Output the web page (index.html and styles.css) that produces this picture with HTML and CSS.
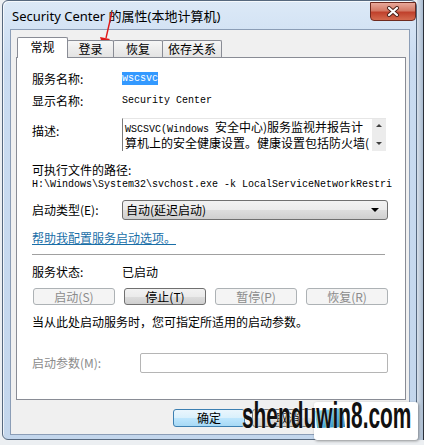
FILE: index.html
```html
<!DOCTYPE html>
<html lang="zh-CN">
<head>
    <meta charset="UTF-8">
    <meta name="viewport" content="width=device-width, initial-scale=1.0">
    <title>Security Center 的属性(本地计算机)</title>
    <link rel="stylesheet" href="styles.css">
</head>
<body>
    <div class="desktop">
        <div class="window">
            <div class="titlebar">
                <span class="title">Security Center 的属性(本地计算机)</span>
                <div class="close-btn">
                    <svg width="14" height="11" viewBox="0 0 14 11">
                        <path d="M3 2 L11 9 M11 2 L3 9" stroke="#4a2018" stroke-width="4" stroke-linecap="round"/>
                        <path d="M3 2 L11 9 M11 2 L3 9" stroke="#ffffff" stroke-width="2.2" stroke-linecap="round"/>
                    </svg>
                </div>
            </div>

            <div class="client">
                <div class="tabs">
                    <div class="tab active">常规</div>
                    <div class="tab tab-login">登录</div>
                    <div class="tab tab-recover">恢复</div>
                    <div class="tab tab-deps">依存关系</div>
                </div>

                <div class="panel">
                    <div class="field">
                        <span class="label">服务名称:</span>
                        <span class="mono"><span class="selected">wscsvc</span></span>
                    </div>
                    <div class="field gap-8">
                        <span class="label">显示名称:</span>
                        <span class="mono">Security Center</span>
                    </div>
                    <div class="field desc-row">
                        <span class="label desc-label">描述:</span>
                        <div class="desc-box">
                            <div class="desc-text"><span class="mono">WSCSVC(Windows </span>安全中心)服务监视并报告计<br>算机上的安全健康设置。健康设置包括防火墙(</div>
                            <div class="scrollbar">
                                <span class="arrow-up"></span>
                                <span class="arrow-down"></span>
                            </div>
                        </div>
                    </div>
                    <div class="path-label">可执行文件的路径:</div>
                    <div class="path mono">H:\Windows\System32\svchost.exe -k LocalServiceNetworkRestricted</div>
                    <div class="field startup-row">
                        <span class="label">启动类型(E):</span>
                        <div class="combo">
                            <span>自动(延迟启动)</span>
                            <span class="combo-arrow"></span>
                        </div>
                    </div>
                    <a href="#" class="help-link">帮助我配置服务启动选项。</a>
                    <div class="separator"></div>
                    <div class="field status-row">
                        <span class="label">服务状态:</span>
                        <span>已启动</span>
                    </div>
                    <div class="control-buttons">
                        <button class="btn" disabled>启动(S)</button>
                        <button class="btn">停止(T)</button>
                        <button class="btn" disabled>暂停(P)</button>
                        <button class="btn" disabled>恢复(R)</button>
                    </div>
                    <p class="note">当从此处启动服务时，您可指定所适用的启动参数。</p>
                    <div class="field params-row">
                        <span class="label disabled-text">启动参数(M):</span>
                        <div class="params-input"></div>
                    </div>
                </div>

                <div class="actions">
                    <button class="btn dialog-btn default">确定</button>
                    <button class="btn dialog-btn">取消</button>
                    <button class="btn dialog-btn">应用(A)</button>
                </div>
            </div>
        </div>
        <div class="desktop-edge"></div>
    </div>

    <!-- red annotation arrow -->
    <svg class="annotation" width="130" height="60" viewBox="0 0 130 60">
        <path d="M112 12 L106 38" stroke="#e01818" stroke-width="1.4" fill="none"/>
        <polygon points="103,47 100,37 110,39" fill="#e01818"/>
    </svg>

    <!-- site watermark -->
    <div class="wm-box"></div>
    <svg class="wm-logo" width="34" height="22" viewBox="0 0 34 22">
        <defs>
            <linearGradient id="wmg" x1="0" y1="0" x2="1" y2="1">
                <stop offset="0" stop-color="#7fe3f5"/>
                <stop offset="1" stop-color="#1a7fb8"/>
            </linearGradient>
        </defs>
        <polygon points="2,4 30,1 32,20 4,21" fill="url(#wmg)"/>
    </svg>
    <div class="wm-text">shenduwin8.com</div>
</body>
</html>
```

FILE: styles.css
```css
:root {
    --frame-top: #dce9f7;
    --frame-bottom: #c3d6ec;
    --frame-border: #56687e;
    --client-bg: #f0f0f0;
    --panel-border: #898c95;
    --text: #000000;
    --text-disabled: #8b8b8b;
    --link: #1a6fa8;
    --select: #3399ff;
}

* {
    margin: 0;
    padding: 0;
    box-sizing: border-box;
}

body {
    width: 424px;
    height: 445px;
    overflow: hidden;
    position: relative;
    background: #eceff2;
    font-family: "Noto Sans CJK SC", sans-serif;
    font-size: 12px;
    color: var(--text);
}

.mono {
    font-family: "Liberation Mono", "Noto Sans CJK SC", monospace;
    font-size: 10px;
}

.desktop {
    display: flex;
    height: 445px;
}

/* Window frame */
.window {
    width: 415px;
    height: 440px;
    margin-left: 2px;
    border: 1px solid var(--frame-border);
    border-radius: 6px;
    background: linear-gradient(var(--frame-top), #cadcf1 60px, var(--frame-bottom));
    display: flex;
    flex-direction: column;
    box-shadow: inset 1px 1px 0 rgba(255, 255, 255, 0.7);
}

.desktop-edge {
    flex: 1;
    height: 440px;
    background: linear-gradient(to right, #d7e0ea, #a9bbd0);
    border-right: 1px solid #2a2f38;
}

.titlebar {
    height: 28px;
    display: flex;
    align-items: flex-start;
    justify-content: space-between;
    padding: 0 0 0 9px;
}

.title {
    margin-top: 7px;
    line-height: 16px;
    font-family: "Noto Sans", "Noto Sans CJK SC", sans-serif;
    font-size: 13px;
    color: #000;
}

.close-btn {
    width: 46px;
    height: 19px;
    margin-top: 1px;
    border: 1px solid #6e2a1f;
    border-radius: 0 0 4px 4px;
    background: linear-gradient(#e8a89a 0%, #d47a66 45%, #c0412c 55%, #d46a4e 100%);
    display: flex;
    align-items: center;
    justify-content: center;
}

/* Client area */
.client {
    flex: 1;
    margin: 0 6px 4px 7px;
    background: var(--client-bg);
    border: 1px solid #8b9db6;
    padding: 7px 3px 0 5px;
}

.tabs {
    display: flex;
    align-items: flex-end;
    height: 21px;
    margin-bottom: -1px;
    padding-left: 1px;
    position: relative;
    z-index: 1;
}

.tab {
    height: 17px;
    margin-bottom: 1px;
    border: 1px solid var(--panel-border);
    border-bottom: none;
    border-radius: 2px 2px 0 0;
    background: linear-gradient(#f6f6f6, #e3e3e3);
    display: flex;
    align-items: center;
    justify-content: center;
    line-height: 14px;
    margin-left: -1px;
}

.tab.active {
    width: 51px;
    height: 21px;
    margin-bottom: 0;
    margin-left: 0;
    background: #fff;
    padding-bottom: 2px;
}

.tab-login { width: 47px; }
.tab-recover { width: 50px; }
.tab-deps { width: 60px; }

.panel {
    height: 343px;
    border: 1px solid var(--panel-border);
    background: #fff;
    padding: 14px 17px 0 15px;
}

.field {
    display: grid;
    grid-template-columns: 90px 1fr;
    align-items: center;
    line-height: 14px;
}

.gap-8 { margin-top: 8px; }

.selected {
    display: inline-block;
    background: var(--select);
    color: #fff;
    line-height: 13px;
}

/* Description */
.desc-row {
    margin-top: 10px;
    align-items: start;
}

.desc-label {
    padding-top: 6px;
}

.desc-box {
    height: 33px;
    width: 264px;
    display: flex;
    border-left: 1px solid #7a7a7a;
    border-top: 1px solid #e6e6e6;
    overflow: hidden;
}

.desc-text {
    flex: 1;
    padding: 1px 0 0 2px;
    line-height: 13px;
    white-space: nowrap;
    overflow: hidden;
}

.scrollbar {
    width: 14px;
    background: #ececec;
    display: flex;
    flex-direction: column;
    justify-content: space-between;
    align-items: center;
    padding: 5px 0 6px;
}

.arrow-up,
.arrow-down {
    width: 0;
    height: 0;
    border-left: 3px solid transparent;
    border-right: 3px solid transparent;
}

.arrow-up { border-bottom: 3px solid #404040; }
.arrow-down { border-top: 3px solid #404040; }

.path-label {
    margin-top: 12px;
    line-height: 14px;
}

.path {
    margin-top: 1px;
    width: 360px;
    line-height: 14px;
    white-space: nowrap;
    overflow: hidden;
}

/* Startup type */
.startup-row { margin-top: 8px; }

.combo {
    height: 20px;
    border: 1px solid #707070;
    border-radius: 3px;
    background: linear-gradient(#f2f2f2 0%, #ebebeb 50%, #dddddd 51%, #cfcfcf 100%);
    display: flex;
    align-items: center;
    justify-content: space-between;
    padding: 0 8px 0 3px;
}

.combo-arrow {
    width: 0;
    height: 0;
    border-left: 4px solid transparent;
    border-right: 4px solid transparent;
    border-top: 4px solid #000;
}

.help-link {
    display: block;
    margin-top: 11px;
    line-height: 14px;
    color: var(--link);
    text-decoration: underline;
}

.separator {
    margin-top: 9px;
    width: 353px;
    height: 1px;
    background: #a0a0a0;
}

.status-row { margin-top: 10px; }

/* Buttons */
.btn {
    font-family: inherit;
    font-size: 12px;
    color: #000;
    border: 1px solid #707070;
    border-radius: 3px;
    background: linear-gradient(#f2f2f2 0%, #ebebeb 50%, #dddddd 51%, #cfcfcf 100%);
    line-height: 14px;
}

.btn:disabled {
    color: var(--text-disabled);
    border-color: #adb2b5;
    background: #f4f4f4;
}

.control-buttons {
    margin-top: 9px;
    padding-left: 1px;
    display: flex;
    justify-content: space-between;
}

.control-buttons .btn {
    width: 82px;
    height: 17px;
}

.note {
    margin-top: 10px;
    line-height: 14px;
}

.params-row {
    margin-top: 24px;
    grid-template-columns: 108px 1fr;
}

.disabled-text { color: var(--text-disabled); }

.params-input {
    height: 20px;
    border: 1px solid #b5b5b5;
    border-radius: 2px;
    background: #fff;
}

/* Dialog buttons */
.actions {
    margin-top: 9px;
    margin-right: 3px;
    display: flex;
    justify-content: flex-end;
    gap: 7px;
}

.dialog-btn {
    width: 72px;
    height: 18px;
}

.dialog-btn.default {
    border-color: #3c7fb1;
    background: linear-gradient(#eaf6fd 0%, #d9f0fc 50%, #bee6fd 51%, #a7d9f5 100%);
}

/* Overlays */
.annotation {
    position: absolute;
    left: 0;
    top: 0;
}

.wm-box {
    position: absolute;
    left: 314px;
    top: 402px;
    width: 104px;
    height: 38px;
    background: #fff;
    border-radius: 3px;
    box-shadow: 1px 1px 3px rgba(0, 0, 0, 0.4);
}

.wm-logo {
    position: absolute;
    left: 313px;
    top: 407px;
}

.wm-text {
    position: absolute;
    left: 242px;
    top: 396px;
    font-family: "Liberation Sans", sans-serif;
    font-weight: bold;
    font-size: 36px;
    line-height: 40px;
    color: #111;
    transform: scaleX(0.58);
    transform-origin: left top;
    text-shadow: 0 0 2px #fff;
    white-space: nowrap;
}
```
